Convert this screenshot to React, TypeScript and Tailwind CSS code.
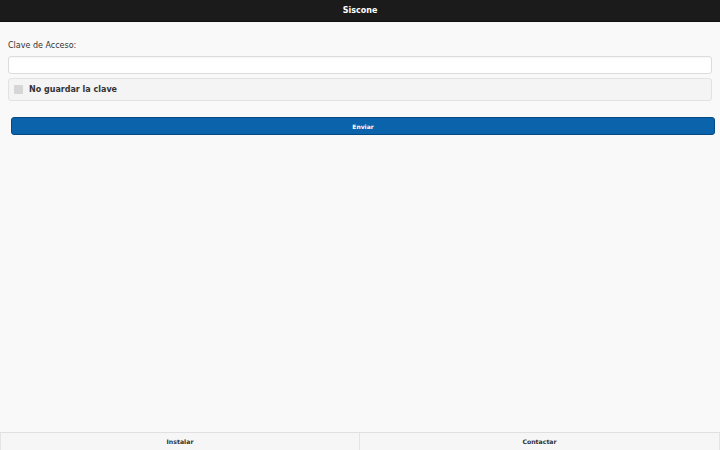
export default function App() {
  const font = { fontFamily: '"DejaVu Sans", "Liberation Sans", sans-serif' };
  return (
    <div className="flex h-[450px] w-[720px] flex-col bg-[#f9f9f9] text-[#333]" style={font}>
      <header className="flex h-[22px] shrink-0 items-center justify-center bg-[#1b1b1b] border-b border-[#111]">
        <h1 className="text-[8px] font-bold text-white">Siscone</h1>
      </header>

      <main className="flex flex-1 flex-col px-[8px] pt-[18px]">
        <label className="text-[8px] leading-[12px] text-[#333]">Clave de Acceso:</label>
        <input
          type="password"
          className="mt-[4px] h-[18px] w-full rounded-[3px] border border-[#dcdcdc] bg-white shadow-[inset_0_1px_2px_rgba(0,0,0,0.04)] outline-none"
        />
        <div className="mt-[4px] flex h-[23px] items-center gap-[6px] rounded-[3px] border border-[#e2e2e2] bg-[#f4f4f4] pl-[5px]">
          <span className="h-[9px] w-[9px] rounded-[1px] bg-[#d6d6d6]" />
          <span className="text-[8px] font-bold text-[#333]">No guardar la clave</span>
        </div>
        <button className="-mr-[3px] ml-[3px] mt-[16px] flex h-[18px] items-center justify-center rounded-[3px] border border-[#064a85] bg-[#0b63ac] text-[6px] font-bold text-white">
          Enviar
        </button>
      </main>

      <footer className="grid h-[18px] shrink-0 grid-cols-2 border-t border-[#e0e0e0] bg-[#f6f6f6]">
        <button className="flex items-center justify-center border-l border-r border-[#e4e4e4] text-[6.2px] font-bold text-[#333]">
          Instalar
        </button>
        <button className="flex items-center justify-center border-r border-[#e4e4e4] text-[6.2px] font-bold text-[#333]">
          Contactar
        </button>
      </footer>
    </div>
  );
}
